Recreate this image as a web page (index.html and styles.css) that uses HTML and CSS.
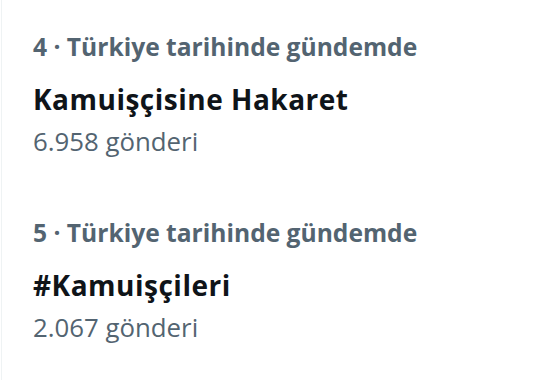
FILE: index.html
```html
<!DOCTYPE html>
<html lang="tr">

<head>
    <meta charset="UTF-8">
    <meta name="viewport" content="width=device-width, initial-scale=1.0">
    <title>Gündem</title>
    <link rel="stylesheet" href="styles.css">
</head>

<body>

    <div class="trend_list">
        <div class="trend">
            <div class="trend_meta">4 · Türkiye tarihinde gündemde</div>
            <div class="trend_name">Kamuişçisine Hakaret</div>
            <div class="trend_count">6.958 gönderi</div>
        </div>

        <div class="trend">
            <div class="trend_meta">5 · Türkiye tarihinde gündemde</div>
            <div class="trend_name">#Kamuişçileri</div>
            <div class="trend_count">2.067 gönderi</div>
        </div>
    </div>

</body>

</html>
```

FILE: styles.css
```css
body {
    margin: 0;
    background-color: #fff;
    font-family: "Open Sans", "Noto Sans", sans-serif;
}

.trend_list {
    min-height: 100vh;
    margin-left: 1px;
    border-left: 1px solid #eff3f4;
    padding-top: 29px;
    box-sizing: border-box;
}

.trend {
    padding-left: 31px;
    line-height: 36px;
}

.trend + .trend {
    margin-top: 56px;
}

.trend_meta {
    color: #536471;
    font-size: 24.6px;
    font-weight: bold;
}

.trend_name {
    margin-top: 16px;
    color: #0f1419;
    font-size: 28px;
    font-weight: bold;
    letter-spacing: 0.5px;
}

.trend_count {
    margin-top: 6px;
    color: #536471;
    font-size: 25.8px;
}
```
